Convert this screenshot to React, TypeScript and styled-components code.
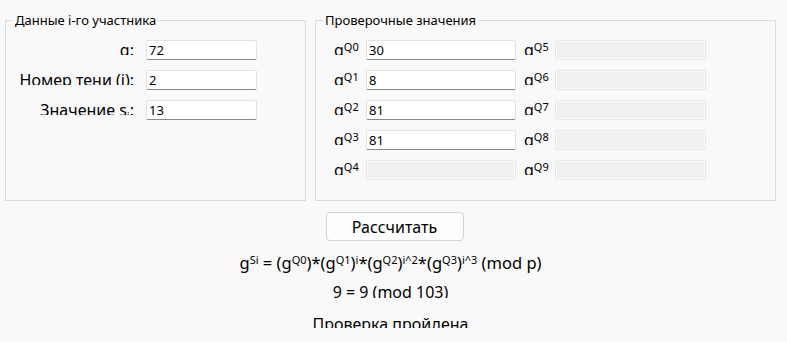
import React from "react";
import styled, { createGlobalStyle } from "styled-components";

const Global = createGlobalStyle`
  html, body { margin: 0; padding: 0; background: #f9f9f9; }
  body { font-family: "Noto Sans", "Open Sans", sans-serif; color: #000; }
`;

const Page = styled.div`
  width: 787px;
  height: 342px;
  overflow: hidden;
  background: #f9f9f9;
`;

const TopRow = styled.div`
  display: flex;
  gap: 9px;
  padding: 12px 0 0 5px;
`;

const Group = styled.fieldset<{ $w: number }>`
  margin: 0;
  padding: 0;
  min-inline-size: 0;
  width: ${(p) => p.$w}px;
  height: 189px;
  box-sizing: border-box;
  border: 1px solid #dcdcdc;
`;

const Legend = styled.legend`
  margin-left: 7px;
  padding: 0 2px;
  font-size: 13px;
  line-height: 16px;
`;

const Grid = styled.div<{ $cols: string; $pl: number; $cg: number }>`
  display: grid;
  grid-template-columns: ${(p) => p.$cols};
  grid-auto-rows: 20px;
  row-gap: 10px;
  column-gap: ${(p) => p.$cg}px;
  padding: 12px 0 0 ${(p) => p.$pl}px;
`;

const Label = styled.div<{ $right?: boolean; $pl?: number }>`
  height: 15px;
  overflow: hidden;
  font-size: 16px;
  line-height: 20px;
  white-space: nowrap;
  text-align: ${(p) => (p.$right ? "right" : "left")};
  padding-left: ${(p) => p.$pl ?? 0}px;
`;

const Sup = styled.span`
  font-size: 11px;
  position: relative;
  top: -5px;
`;

const Sub = styled.span`
  font-size: 11px;
  position: relative;
  top: 4px;
`;

const Input = styled.input`
  box-sizing: border-box;
  height: 20px;
  width: 100%;
  margin: 0;
  padding: 0 2px;
  border: 1px solid #e2e2e2;
  border-bottom-color: #878787;
  border-radius: 2px;
  background: #fff;
  font-family: "Noto Sans", sans-serif;
  font-size: 13px;
  color: #000;
  outline: none;
  &:disabled {
    background: #f0f0f0;
    border: 1px solid #e6e6e6;
    box-shadow: inset 0 0 0 1px #fbfbfb;
  }
`;

const Bottom = styled.div`
  display: flex;
  flex-direction: column;
  align-items: center;
  padding-top: 11px;
`;

const Button = styled.button`
  width: 138px;
  height: 29px;
  margin-left: 2px;
  box-sizing: border-box;
  border: 1px solid #d2d2d2;
  border-radius: 4px;
  background: #fdfdfd;
  font-family: "Noto Sans", sans-serif;
  font-size: 16px;
  color: #000;
  padding: 0;
`;

const Line = styled.div<{ $h: number; $mt: number; $fs?: number }>`
  height: ${(p) => p.$h}px;
  margin-top: ${(p) => p.$mt}px;
  margin-right: 6px;
  overflow: hidden;
  font-size: ${(p) => p.$fs ?? 16}px;
  line-height: 20px;
  white-space: nowrap;
`;

const G = ({ q }: { q: number }) => (
  <>
    g<Sup>Q{q}</Sup>
  </>
);

const Q = (q: number, pl = 0) => (
  <Label $pl={pl}>
    <G q={q} />
  </Label>
);

export default function App() {
  const vals: Record<number, string> = { 0: "30", 1: "8", 2: "81", 3: "81" };
  return (
    <Page>
      <Global />
      <TopRow>
        <Group $w={301}>
          <Legend>Данные i-го участника</Legend>
          <Grid $cols="128px 111px" $pl={0} $cg={12}>
            <Label $right>g:</Label>
            <Input defaultValue="72" />
            <Label $right>Номер тени (i):</Label>
            <Input defaultValue="2" />
            <Label $right>
              Значение s<Sub>i</Sub>:
            </Label>
            <Input defaultValue="13" />
          </Grid>
        </Group>
        <Group $w={461}>
          <Legend>Проверочные значения</Legend>
          <Grid $cols="32px 150px 39px 151px" $pl={18} $cg={0}>
            {[0, 1, 2, 3, 4].map((i) => (
              <React.Fragment key={i}>
                {Q(i)}
                {i < 4 ? <Input defaultValue={vals[i]} /> : <Input disabled />}
                {Q(i + 5, 8)}
                <Input disabled />
              </React.Fragment>
            ))}
          </Grid>
        </Group>
      </TopRow>
      <Bottom>
        <Button>Рассчитать</Button>
        <Line $h={24} $mt={12} $fs={16.5}>
          g<Sup>Si</Sup> = (<G q={0} />)*(<G q={1} />)<Sup>i</Sup>*(<G q={2} />)
          <Sup>i^2</Sup>*(<G q={3} />)<Sup>i^3</Sup> (mod p)
        </Line>
        <Line $h={16} $mt={5}>9 = 9 (mod 103)</Line>
        <Line $h={14} $mt={16}>Проверка пройдена</Line>
      </Bottom>
    </Page>
  );
}
